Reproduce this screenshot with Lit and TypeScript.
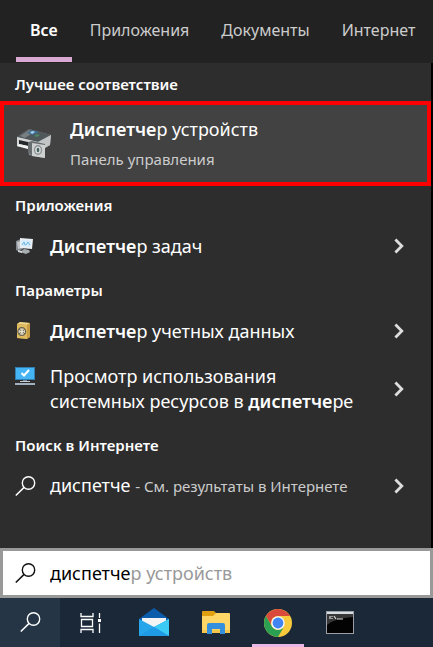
import { LitElement, html, css, svg } from "lit";
import { customElement, state } from "lit/decorators.js";

const magnifier = svg`<circle cx="13.5" cy="7" r="6.2" fill="none" stroke="currentColor" stroke-width="1.4"/><path d="M9.1 11.4 0.8 19.5" fill="none" stroke="currentColor" stroke-width="1.5"/>`;

const searchIcon = html`<svg width="21" height="21" viewBox="0 0 21 21" aria-hidden="true">${magnifier}</svg>`;

const printerIcon = html`<svg width="36" height="32" viewBox="0 0 36 32" aria-hidden="true">
  <path d="M1 9 13 1 35 7 34 17 29 20 29 30 13 27 12 21 1 18Z" fill="#8d9192"/>
  <path d="M1 9 13 1 35 7 22 14Z" fill="#50575b"/>
  <path d="M4 8 13 2 18 4 9 10Z" fill="#777f83"/>
  <path d="M11 5 16 2 23 4 17 7Z" fill="#3f6f96"/>
  <path d="m14 4 3-1 2 1-3 2Z" fill="#a9d3ea"/>
  <path d="m18 8 3-2 3 1-3 2Z" fill="#4b8a62"/>
  <path d="m1 9 21 5v8L1 18Z" fill="#d4d6d6"/>
  <path d="m3 12 9 2v4l-9-2Z" fill="#25292b"/>
  <path d="m3 16 9 2v3L1 18Z" fill="#f1f2f2"/>
  <path d="m22 14 13-7-1 10-5 3-7-3Z" fill="#c2c5c5"/>
  <path d="m12 14 4-1 13 3v14l-13-2-4-4Z" fill="#686d6f"/>
  <path d="m16 15 13 2v13l-13-2Z" fill="#cfd1d1"/>
  <ellipse cx="22" cy="22" rx="4.2" ry="5" fill="#8d9395"/>
  <ellipse cx="22" cy="22" rx="2.8" ry="3.6" fill="#d7dbdc"/>
  <ellipse cx="22" cy="22" rx="1.3" ry="2.2" fill="#45625c"/>
</svg>`;

const taskManagerIcon = html`<svg width="20" height="18" viewBox="0 0 20 18" aria-hidden="true">
  <path d="m1 4 5-2 2 10-5 2-2-1Z" fill="#858b90"/>
  <path d="m2 5 4-1 1 7-4 1Z" fill="#c3c7ca"/>
  <path d="m5 1 13 1-1 10-12-1Z" fill="#e9eef2"/>
  <path d="m7 3 9 1-1 6-9-1Z" fill="#d3eafa"/>
  <path d="m7 8 2-3 1 3 2-1 1-2 2 3" fill="none" stroke="#6fb6e2" stroke-width="1"/>
  <path d="m9 12 5 1 1 2-4 2-6-2Z" fill="#a8adb0"/>
  <path d="m3 13 4 1v2l-4-1Z" fill="#d4d6d8"/>
</svg>`;

const safeIcon = html`<svg width="20" height="20" viewBox="0 0 20 20" aria-hidden="true">
  <path d="m2 3 3-2 10 1v14l-3 2-10-1Z" fill="#a88332"/>
  <path d="m2 3 3-2 10 1-3 2Z" fill="#f0d78e"/>
  <path d="m2 3 10 1v14L2 17Z" fill="#dfba5e"/>
  <path d="m12 4 3-2v14l-3 2Z" fill="#c99d42"/>
  <circle cx="6.8" cy="10.6" r="3.9" fill="#d8d1b8" stroke="#68624e" stroke-width="1.2"/>
  <path d="m4 8 6 5M4 13l6-5" stroke="#68624e" stroke-width="1"/>
  <circle cx="6.8" cy="10.6" r="1.3" fill="#ece8d8"/>
</svg>`;

const monitorIcon = html`<svg width="20" height="20" viewBox="0 0 20 20" aria-hidden="true">
  <path d="M0 1h20v13H0Z" fill="#2f7fb5"/>
  <path d="M1 2h18v11H1Z" fill="#45b4f5"/>
  <path d="m6.500 7 2.500 2.500 5-5.500" fill="none" stroke="#fff" stroke-width="2"/>
  <path d="M8 14h4v2H8Z" fill="#73879a"/>
  <path d="M5 15h10v1H5Z" fill="#c4cfda"/>
  <path d="M0 17h20v2H0Z" fill="#a2afbf"/>
</svg>`;

const chevron = html`<svg width="10" height="16" viewBox="0 0 10 16" aria-hidden="true">
  <path d="m1.400 1.500 6.400 6.500-6.400 6.500" fill="none" stroke="currentColor" stroke-width="2.800"/>
</svg>`;

const taskViewIcon = html`<svg width="21" height="20" viewBox="0 0 21 20" aria-hidden="true">
  <path d="M1 0v3.500h12V0M1 20v-3.500h12V20M1.500 6.500h11v7h-11ZM19.500 0v5M19.500 10.500V20" fill="none" stroke="currentColor" stroke-width="1.300"/>
  <path d="M18 6h3v3h-3Z" fill="currentColor"/>
</svg>`;

const mailIcon = html`<svg width="32" height="29" viewBox="0 0 32 29" aria-hidden="true">
  <path d="M1 11 16 0l15 11v5H1Z" fill="#0b5cab"/>
  <path d="M4 10h24v6l-12 6L4 14Z" fill="#f4f4f4"/>
  <path d="M1 11v17h30V11L16 19Z" fill="#27a5ea"/>
  <path d="m31 11-15 8 15 9Z" fill="#3ccbf4"/>
  <path d="m1 28 15-9 15 9Z" fill="#1f9ae5"/>
</svg>`;

const folderIcon = html`<svg width="28" height="24" viewBox="0 0 28 24" aria-hidden="true">
  <path d="M0 1q0-1 1-1h11l3 3-3 3H0Z" fill="#e0a010"/>
  <path d="M0 5h11l3-3h13q1 0 1 1v19H0Z" fill="#ffd766"/>
  <path d="M0 19h28v3H0Z" fill="#f7c64c"/>
  <path d="M5 23v-9q0-2 2-2h14q2 0 2 2v9h-5v-5h-8v5Z" fill="#368fdc"/>
</svg>`;

const chromeIcon = html`<svg width="28" height="28" viewBox="0 0 28 28" aria-hidden="true">
  <circle cx="14" cy="14" r="14" fill="#f9cb3c"/>
  <path d="M1.880 7A14 14 0 0 1 26.120 7H14A7 7 0 0 0 7.940 17.500Z" fill="#da4a3c"/>
  <path d="M1.880 7A14 14 0 0 0 14 28L20.060 17.500A7 7 0 0 1 7.940 17.500Z" fill="#2ba052"/>
  <circle cx="14" cy="14" r="6.800" fill="#f5f7fa"/>
  <circle cx="14" cy="14" r="5.400" fill="#4384f3"/>
</svg>`;

const consoleIcon = html`<svg width="28" height="23" viewBox="0 0 28 23" aria-hidden="true">
  <path d="M0 0h28v23H0Z" fill="#9b9fa3"/>
  <path d="M1 1h26v2H1Z" fill="#d6dde3"/>
  <path d="M1 3h26v19H1Z" fill="#030303"/>
  <path d="M1 3h26v3Q9 7 1 14Z" fill="#373737"/>
  <path d="M4 5v3M6 5v1M6 7v1M8 5l2 3M11 8h6" fill="none" stroke="#ddd" stroke-width="1.200"/>
</svg>`;

@customElement("app-root")
export class AppRoot extends LitElement {
  @state() private query = "диспетче";

  static styles = css`
    :host {
      display: flex;
      flex-direction: column;
      min-height: 100vh;
      background: #2d2d2d;
      color: #fff;
      font-family: "Noto Sans", "Open Sans", sans-serif;
      font-size: 18px;
    }
    * { box-sizing: border-box; }
    svg { display: block; flex: none; }
    button {
      margin: 0;
      padding: 0;
      border: 0;
      background: none;
      color: inherit;
      font: inherit;
      text-align: left;
    }
    h2 { margin: 0; }
    b { font-weight: 600; }
    .tabs {
      display: flex;
      gap: 4px;
      height: 63px;
      padding: 0 8px 1px 16px;
      background: #222;
      font-size: 16px;
    }
    .tab {
      padding: 2px 14px 0;
      border-bottom: 5px solid transparent;
      color: #ccc;
      white-space: nowrap;
    }
    .tab.active {
      border-color: #d9a9d3;
      color: #fff;
      font-weight: 600;
    }
    .results { flex: 1; border-right: 2px solid #000; padding-bottom: 16px; }
    .group + .group { padding-top: 1px; }
    .heading {
      display: flex;
      align-items: center;
      height: 38px;
      padding-left: 15px;
      font-size: 15px;
      font-weight: 600;
    }
    .first .heading { padding-top: 4px; }
    .best {
      display: flex;
      align-items: center;
      gap: 18px;
      width: 100%;
      height: 85px;
      padding: 0 12px;
      border: 4px solid #f00;
      background: #424242;
    }
    .title { display: block; line-height: 30px; }
    .sub { display: block; color: #ccc; font-size: 15px; line-height: 30px; }
    .row {
      display: flex;
      align-items: center;
      width: 100%;
      min-height: 46px;
      padding: 0 27px 2px 15px;
    }
    .row.tall { min-height: 70px; }
    .icon { display: flex; flex: none; width: 35px; }
    .tall .icon { align-self: flex-start; padding-top: 11px; }
    .label { flex: 1; line-height: 25px; }
    .hint { color: #ccc; font-size: 15px; }
    .go { color: #ddd; }
    .search {
      display: flex;
      align-items: center;
      height: 50px;
      padding: 0 12px;
      border: 3px solid #999;
      background: #fff;
      color: #111;
    }
    .field { display: grid; flex: 1; line-height: 25px; }
    .ghost, .input { grid-area: 1 / 1; }
    .ghost { color: #999; white-space: pre; }
    .typed { visibility: hidden; }
    .input {
      width: 100%;
      min-width: 0;
      padding: 0;
      border: 0;
      outline: 0;
      background: transparent;
      color: #000;
      font: inherit;
    }
    .taskbar { display: flex; height: 49px; background: #1a2838; }
    .app {
      display: flex;
      align-items: center;
      justify-content: center;
      width: 52px;
      margin: 0 5px;
      padding-top: 3px;
      border-bottom: 3px solid transparent;
    }
    .app.find { width: 60px; margin: 0; background: #263545; }
    .app.view { width: 60px; margin: 0; }
    .view + .app { margin-left: 8px; }
    .app.running { border-color: #eab8e5; }
  `;

  render() {
    return html`
      <nav class="tabs" aria-label="Фильтр">
        <button class="tab active">Все</button>
        <button class="tab">Приложения</button>
        <button class="tab">Документы</button>
        <button class="tab">Интернет</button>
      </nav>
      <main class="results">
        <section class="first">
          <h2 class="heading">Лучшее соответствие</h2>
          <button class="best">
            ${printerIcon}
            <span>
              <span class="title"><b>Диспетче</b>р устройств</span>
              <span class="sub">Панель управления</span>
            </span>
          </button>
        </section>
        <section class="group">
          <h2 class="heading">Приложения</h2>
          ${this.row(taskManagerIcon, html`<b>Диспетче</b>р задач`)}
        </section>
        <section class="group">
          <h2 class="heading">Параметры</h2>
          ${this.row(safeIcon, html`<b>Диспетче</b>р учетных данных`)}
          ${this.row(monitorIcon, html`Просмотр использования<br>системных ресурсов в <b>диспетче</b>ре`, "tall")}
        </section>
        <section class="group">
          <h2 class="heading">Поиск в Интернете</h2>
          ${this.row(searchIcon, html`диспетче <span class="hint">- См. результаты в Интернете</span>`)}
        </section>
      </main>
      <label class="search">
        <span class="icon">${searchIcon}</span>
        <span class="field">
          <span class="ghost" aria-hidden="true"><span class="typed">${this.query}</span>р устройств</span>
          <input class="input" type="text" aria-label="Поиск" .value=${this.query}
            @input=${(e: Event) => (this.query = (e.target as HTMLInputElement).value)}>
        </span>
      </label>
      <footer class="taskbar">
        <button class="app find" aria-label="Поиск">${searchIcon}</button>
        <button class="app view" aria-label="Представление задач">${taskViewIcon}</button>
        <button class="app" aria-label="Почта">${mailIcon}</button>
        <button class="app" aria-label="Проводник">${folderIcon}</button>
        <button class="app running" aria-label="Chrome">${chromeIcon}</button>
        <button class="app" aria-label="Командная строка">${consoleIcon}</button>
      </footer>
    `;
  }

  private row(icon: unknown, label: unknown, kind = "") {
    return html`<button class="row ${kind}">
      <span class="icon">${icon}</span>
      <span class="label">${label}</span>
      <span class="go">${chevron}</span>
    </button>`;
  }
}
